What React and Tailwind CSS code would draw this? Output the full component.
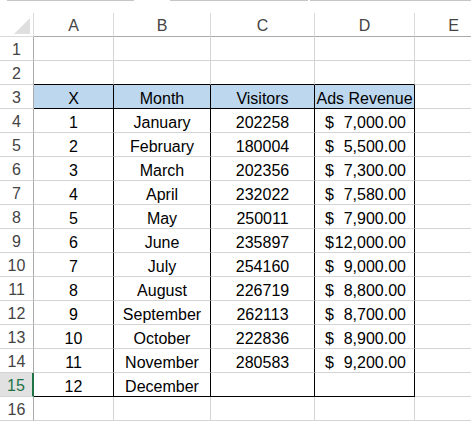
import React from "react";

const data = [
  ["1", "January", "202258", "7,000.00"],
  ["2", "February", "180004", "5,500.00"],
  ["3", "March", "202356", "7,300.00"],
  ["4", "April", "232022", "7,580.00"],
  ["5", "May", "250011", "7,900.00"],
  ["6", "June", "235897", "12,000.00"],
  ["7", "July", "254160", "9,000.00"],
  ["8", "August", "226719", "8,800.00"],
  ["9", "September", "262113", "8,700.00"],
  ["10", "October", "222836", "8,900.00"],
  ["11", "November", "280583", "9,200.00"],
  ["12", "December", "", ""],
];

const widths = ["w-[80px]", "w-[97px]", "w-[104px]", "w-[100px]"];

// rows 1..16 -> cells for A..D
const getRow = (r) => {
  if (r === 3) return ["X", "Month", "Visitors", "Ads Revenue"];
  if (r >= 4 && r <= 15) return data[r - 4];
  return ["", "", "", ""];
};

const Cell = ({ r, c, value }) => {
  const inTable = r >= 3 && r <= 15;
  const blackBottom = r === 2 || r === 3 || r === 15;
  const right = inTable ? "border-r-black" : "border-r-[#d4d4d4]";
  const bottom = blackBottom ? "border-b-black" : "border-b-[#d4d4d4]";
  const bg = r === 3 ? "bg-[#bdd7ee]" : "bg-white";

  if (c === 3 && r >= 4 && value) {
    return (
      <div className={`${widths[c]} shrink-0 h-6 border-r border-b ${right} ${bottom} ${bg} flex justify-between pl-[10px] pr-[8px] pt-[4px] leading-[19px]`}>
        <span>$</span>
        <span>{value}</span>
      </div>
    );
  }

  return (
    <div className={`${widths[c]} shrink-0 h-6 border-r border-b ${right} ${bottom} ${bg} text-center pt-[4px] leading-[19px] whitespace-nowrap`}>
      {value}
    </div>
  );
};

const RowHeader = ({ r }) => {
  if (r === 15) {
    return (
      <div className="w-[34px] shrink-0 h-6 border-r-2 border-b border-r-[#217346] border-b-[#d4d4d4] bg-[#e1e1e1] text-[#217346] text-center pt-[3px] leading-[19px]">
        {r}
      </div>
    );
  }
  return (
    <div className="w-[34px] shrink-0 h-6 border-r border-b border-r-[#ababab] border-b-[#d4d4d4] bg-white text-[#444] text-center pt-[3px] leading-[19px]">
      {r}
    </div>
  );
};

export default function App() {
  const rows = Array.from({ length: 16 }, (_, i) => i + 1);

  return (
    <div className="w-[471px] h-[422px] bg-white overflow-hidden text-[16px] text-black font-['Liberation_Sans',Arial,sans-serif]">
      {/* formula bar edge */}
      <div className="h-[13px] flex items-start">
        <div className="w-[7px] shrink-0" />
        <div className="w-[127px] shrink-0 h-px bg-[#c6c6c6]" />
        <div className="w-[36px] shrink-0" />
        <div className="w-[138px] shrink-0 h-px bg-[#c6c6c6]" />
        <div className="w-[2px] shrink-0" />
        <div className="flex-1 h-px bg-[#c6c6c6]" />
      </div>

      {/* column headers */}
      <div className="flex h-6">
        <div className="w-[34px] shrink-0 h-6 border-r border-b border-r-[#dadada] border-b-[#dadada] flex items-end justify-end pr-[3px] pb-[2px]">
          <svg width="16" height="16" viewBox="0 0 16 16">
            <polygon points="16,0 16,16 0,16" fill="#dfdfdf" />
          </svg>
        </div>
        {["A", "B", "C", "D"].map((l, i) => (
          <div key={l} className={`${widths[i]} shrink-0 h-6 border-r border-b border-r-[#dadada] border-b-[#ababab] text-center text-[#444] pt-[3px] leading-[19px]`}>
            {l}
          </div>
        ))}
        <div className="w-[77px] shrink-0 h-6 border-b border-b-[#ababab] text-center text-[#444] pt-[3px] leading-[19px]">
          E
        </div>
      </div>

      {rows.map((r) => (
        <div key={r} className="flex h-6">
          <RowHeader r={r} />
          {getRow(r).map((v, c) => (
            <Cell key={c} r={r} c={c} value={v} />
          ))}
          <div className="w-[77px] shrink-0 h-6 border-r border-b border-r-[#d4d4d4] border-b-[#d4d4d4]" />
        </div>
      ))}
    </div>
  );
}
